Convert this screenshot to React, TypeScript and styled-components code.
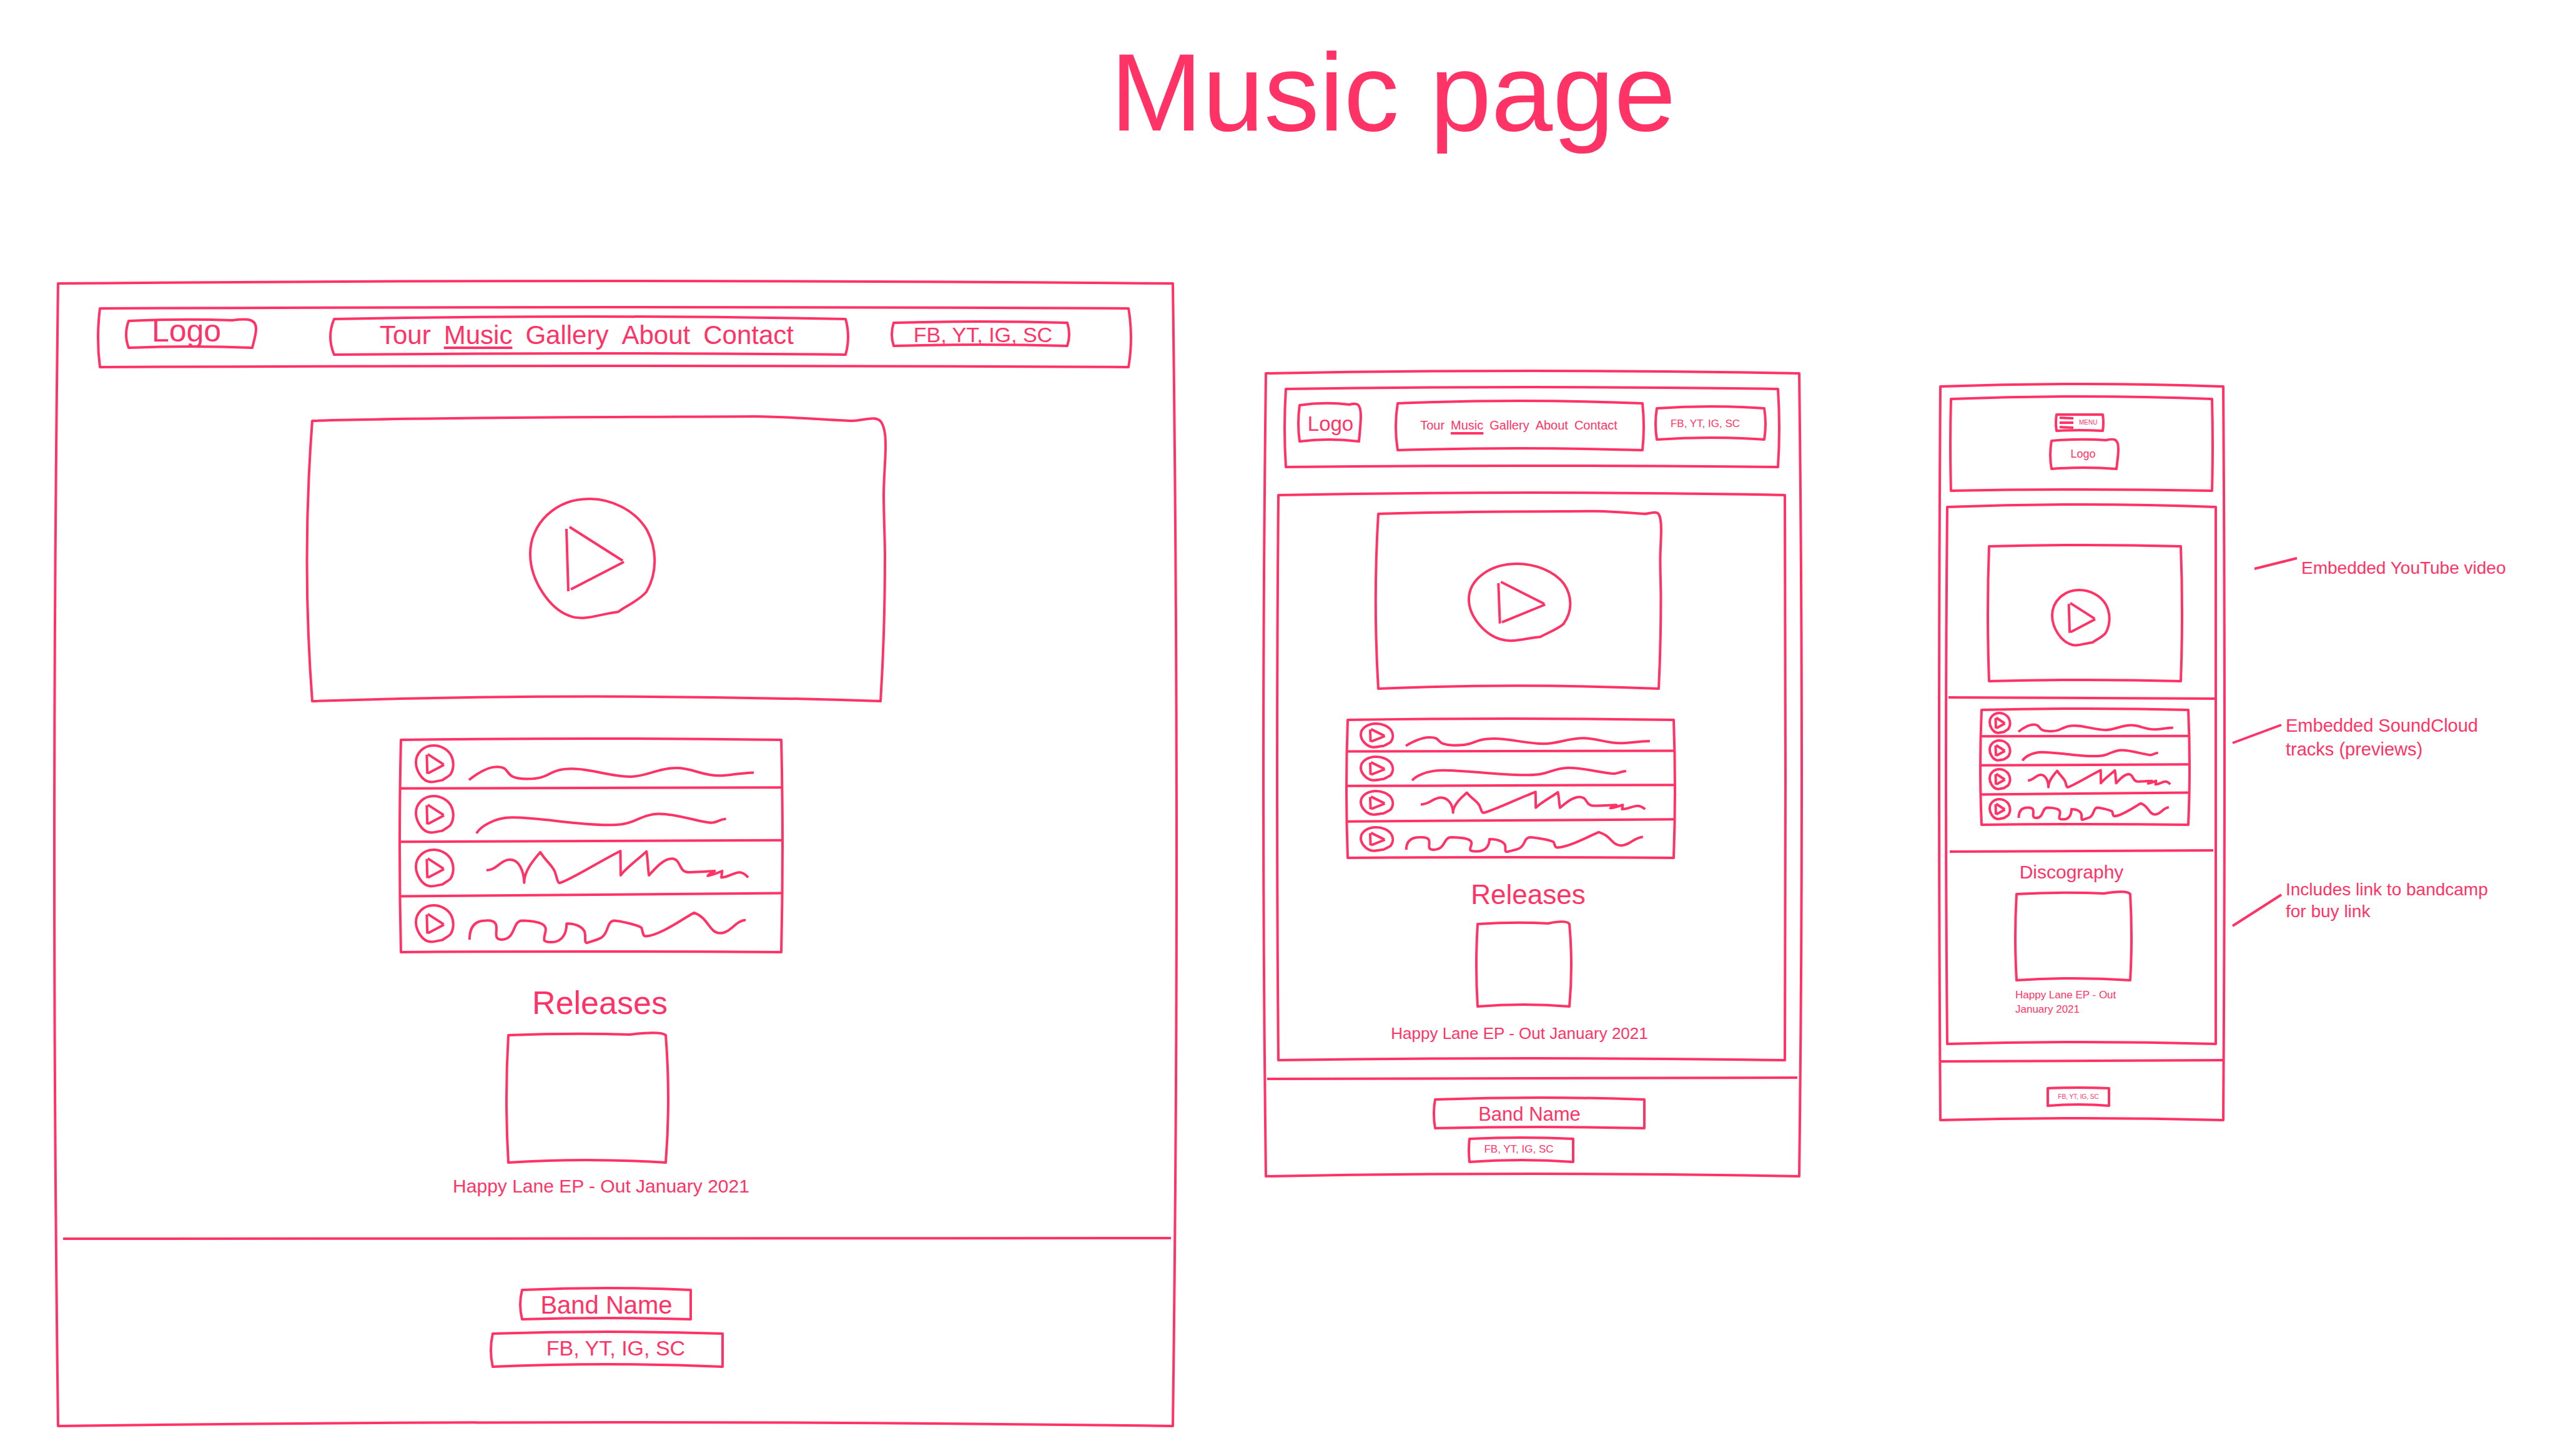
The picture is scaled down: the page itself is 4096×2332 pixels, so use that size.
import React from 'react';
import styled, { createGlobalStyle } from 'styled-components';

const INK = '#ff3366';

const GlobalStyle = createGlobalStyle`
  *, *::before, *::after { box-sizing: border-box; }
  body {
    margin: 0;
    background: #ffffff;
    color: ${INK};
    font-family: "Liberation Sans", Arial, sans-serif;
  }
`;

/* ---------- hand-drawn line work ---------- */

const Drawing = styled.svg`
  display: block;
  width: 100%;
  height: 100%;
  overflow: visible;
  fill: none;
  stroke: ${INK};
  stroke-width: 4px;
  stroke-linejoin: round;

  path {
    vector-effect: non-scaling-stroke;
  }
`;

const Backdrop = styled(Drawing)`
  position: absolute;
  inset: 0;
  pointer-events: none;
`;

type Corner = 'plain' | 'soft' | 'round';

interface OutlineProps {
  w: number;
  h: number;
  /** how far the top, right, bottom and left strokes bow, in px */
  bow: [number, number, number, number];
  corner?: Corner;
}

function Outline({ w, h, bow: [t, r, b, l], corner = 'plain' }: OutlineProps) {
  const tops: Record<Corner, string> = {
    plain: `M0 0 Q${w / 2} ${-2 * t} ${w} 0 Q${w + 2 * r} ${h / 2} ${w} ${h}`,
    soft: `M0 0 Q${w * 0.4} ${-2 * t} ${w * 0.77} -1 Q${w * 0.97} -7 ${w} 0 Q${w + 2 * r} ${h / 2} ${w} ${h}`,
    round:
      `M0 0 Q${w * 0.42} ${-2 * t} ${w * 0.84} -1 C${w * 0.96} -4 ${w + r} -4 ${w + r} ${h * 0.3} ` +
      `C${w + r} ${h * 0.5} ${w + r / 3} ${h * 0.8} ${w} ${h}`,
  };
  return (
    <Backdrop viewBox={`0 0 ${w} ${h}`} preserveAspectRatio="none" aria-hidden="true">
      <path d={`${tops[corner]} Q${w / 2} ${h - 2 * b} 0 ${h} Q${-2 * l} ${h / 2} 0 0 Z`} />
    </Backdrop>
  );
}

function VideoOutline() {
  return (
    <Backdrop viewBox="0 0 910 449" preserveAspectRatio="none" aria-hidden="true">
      <path d="M0 0 C200 -6 500 -6 708 -7 C780 -6 830 -1 865 0 C885 -1 903 -9 911 2 C918 13 918 30 918 42 C918 60 915 95 915 119 C915 150 917 190 917 215 C917 300 915 370 910 449 Q455 434 0 449 Q-17 224 0 0 Z" />
    </Backdrop>
  );
}

function PlayMark() {
  return (
    <Drawing viewBox="0 0 200 192" preserveAspectRatio="none" aria-hidden="true">
      <path d="M95 0 C40 0 0 40 0 88 C0 132 32 176 62 187 C86 197 112 184 141 181 C152 172 173 164 186 149 C205 116 202 78 187 50 C168 18 130 0 95 0 Z" />
      <path d="M58 48 L61 148 M63 45 L148 99 M150 101 L65 145" />
    </Drawing>
  );
}

const Rule = styled(Drawing)`
  height: 2px;
`;

function Divider({ from, to }: { from: number; to: number }) {
  return (
    <Rule viewBox="0 0 100 2" preserveAspectRatio="none" aria-hidden="true">
      <path d={`M0 ${from} L100 ${to}`} />
    </Rule>
  );
}

/* ---------- page scaffold ---------- */

const Page = styled.main`
  width: 100%;
  padding: 60px 0 40px;
`;

const TitleRow = styled.header`
  display: grid;
  grid-template-columns: 1778fr 2318fr;
`;

const Title = styled.h1`
  grid-column: 2;
  margin: 0;
  font-size: 177px;
  line-height: 177px;
  font-weight: 400;
  white-space: nowrap;
`;

const Boards = styled.div`
  display: grid;
  grid-template-columns: 93fr 1785fr 149fr 854fr 226fr 453fr 536fr;
  align-items: start;
`;

const Board = styled.section<{ $col: number; $top: number; $end: number }>`
  position: relative;
  grid-column: ${(p) => p.$col};
  margin-top: ${(p) => p.$top}px;
  padding-bottom: ${(p) => p.$end}px;
`;

/* One centred or side-weighted slot: left gutter, content, right gutter. */
const Slot = styled.div<{ $cols: [number, number, number]; $top?: number }>`
  display: grid;
  grid-template-columns: ${(p) => p.$cols.map((c) => `minmax(0, ${c}fr)`).join(' ')};
  padding-top: ${(p) => p.$top ?? 0}px;

  > * {
    grid-column: 2;
  }
`;

const Bar = styled.div<{ $cols: number[]; $h: number }>`
  position: relative;
  display: grid;
  grid-template-columns: ${(p) => p.$cols.map((c) => `minmax(0, ${c}fr)`).join(' ')};
  align-items: start;
  height: ${(p) => p.$h}px;
`;

const Panel = styled.div<{ $pad?: string }>`
  position: relative;
  padding: ${(p) => p.$pad ?? '0'};
`;

const Box = styled.div<{ $h: number; $pad?: string; $col?: number; $top?: number }>`
  position: relative;
  display: flex;
  align-items: center;
  justify-content: center;
  height: ${(p) => p.$h}px;
  padding: ${(p) => p.$pad ?? '0'};
  margin-top: ${(p) => p.$top ?? 0}px;
  ${(p) => (p.$col ? `grid-column: ${p.$col};` : '')}
`;

const Text = styled.span<{ $size: number }>`
  font-size: ${(p) => p.$size}px;
  line-height: 1;
  white-space: nowrap;
`;

const Heading = styled.h2<{ $size: number; $line: number }>`
  margin: 0;
  font-size: ${(p) => p.$size}px;
  line-height: ${(p) => p.$line}px;
  font-weight: 400;
  text-align: center;
`;

const Caption = styled.p<{ $size: number; $line: number; $align?: string }>`
  margin: 0;
  font-size: ${(p) => p.$size}px;
  line-height: ${(p) => p.$line}px;
  text-align: ${(p) => p.$align ?? 'center'};
`;

/* ---------- navigation ---------- */

const NavList = styled.nav<{ $size: number; $gap: number }>`
  display: flex;
  gap: ${(p) => p.$gap}px;
  font-size: ${(p) => p.$size}px;
  line-height: 1;
`;

const NavLink = styled.a<{ $current: boolean }>`
  color: inherit;
  white-space: nowrap;
  text-decoration: ${(p) => (p.$current ? 'underline' : 'none')};
  text-decoration-thickness: 4px;
  text-underline-offset: 4px;
  text-decoration-skip-ink: none;
`;

const PAGES = ['Tour', 'Music', 'Gallery', 'About', 'Contact'];

function Nav({ size, gap }: { size: number; gap: number }) {
  return (
    <NavList $size={size} $gap={gap} aria-label="Pages">
      {PAGES.map((name) => (
        <NavLink key={name} href={`#${name.toLowerCase()}`} $current={name === 'Music'}>
          {name}
        </NavLink>
      ))}
    </NavList>
  );
}

/* ---------- media ---------- */

const bareButton = `
  appearance: none;
  border: 0;
  background: none;
  color: inherit;
  font-family: inherit;
  cursor: pointer;
`;

const VideoStage = styled.div<{ $w: number; $h: number; $pad?: string }>`
  position: relative;
  display: flex;
  align-items: center;
  justify-content: center;
  aspect-ratio: ${(p) => p.$w} / ${(p) => p.$h};
  padding: ${(p) => p.$pad ?? '0'};
`;

const PlayButton = styled.button<{ $w: number; $h: number }>`
  ${bareButton}
  padding: 0;
  width: ${(p) => p.$w}px;
  height: ${(p) => p.$h}px;
`;

const TrackList = styled.ol`
  position: relative;
  list-style: none;
  margin: 0;
  padding: 0;
`;

const TrackRow = styled.li<{ $h: number }>`
  position: relative;
  display: grid;
  grid-template-columns: 24fr 60fr 25fr 456fr 44fr;
  align-items: center;
  height: ${(p) => p.$h}px;
`;

const TrackPlay = styled.button<{ $h: number }>`
  ${bareButton}
  grid-column: 2;
  padding: 0;
  width: 100%;
  height: ${(p) => p.$h}px;
`;

const Wave = styled(Drawing)`
  grid-column: 4;
  min-height: 0;
`;

const WAVES = [
  {
    box: '340 115 1027 251',
    tilt: 5,
    d: 'M340 324 C370 290 410 256 440 256 C500 256 455 318 548 319 C640 320 620 266 712 266 C780 266 850 307 920 307 C980 307 1020 262 1088 262 C1145 262 1180 302 1243 302 C1280 302 1310 288 1367 286',
  },
  {
    box: '340 366 1027 271',
    tilt: 9,
    d: 'M367 598 C380 565 430 517 495 517 C600 517 720 555 840 555 C890 555 905 550 930 537 C960 520 985 499 1024 498 C1095 498 1165 540 1215 544 C1235 544 1240 527 1267 524',
  },
  {
    box: '340 637 1027 274',
    tilt: 18,
    d: 'M403 786 C440 786 455 732 488 732 C520 732 538 790 539 850 C538 790 575 730 597 694 C620 745 640 760 650 795 C658 830 660 852 667 851 C700 840 800 750 886 688 L887 812 C905 775 955 725 980 690 C985 730 985 780 989 812 C1010 780 1040 727 1072 727 C1105 727 1095 795 1130 796 C1170 797 1195 792 1226 790 C1215 800 1205 805 1201 815 C1220 810 1240 798 1253 790 L1250 823 C1275 823 1295 797 1315 797 C1330 797 1340 812 1347 823',
  },
  {
    box: '340 911 1027 293',
    tilt: 0,
    d: 'M342 1140 C342 1080 358 1043 400 1043 C475 1036 410 1140 457 1140 C510 1140 495 1044 532 1043 C660 1048 602 1110 612 1145 C620 1155 630 1153 640 1153 C675 1153 692 1110 692 1058 C735 1058 760 1085 759 1120 C759 1150 758 1155 765 1157 C775 1152 800 1143 815 1132 C845 1108 835 1048 863 1043 C885 1045 950 1065 962 1080 C968 1100 965 1122 977 1123 C1030 1120 1120 1025 1152 1003 C1205 1030 1205 1105 1245 1107 C1285 1107 1300 1042 1338 1040',
  },
];

function Tracks({ rows, icon, w }: { rows: number[]; icon: number; w: number }) {
  const total = rows.reduce((a, b) => a + b, 0);
  return (
    <TrackList>
      <Outline w={w} h={total} bow={[2, 2, 1, 2]} />
      {WAVES.map((wave, i) => (
        <TrackRow key={wave.box} $h={rows[i]}>
          {i < WAVES.length - 1 && (
            <Backdrop viewBox="0 0 100 300" preserveAspectRatio="none" aria-hidden="true">
              <path d={`M0 ${300 + wave.tilt / 2} L100 ${300 - wave.tilt / 2}`} />
            </Backdrop>
          )}
          <TrackPlay $h={icon} type="button" aria-label={`Play track ${i + 1}`}>
            <PlayMark />
          </TrackPlay>
          <Wave viewBox={wave.box} preserveAspectRatio="none" aria-hidden="true">
            <path d={wave.d} />
          </Wave>
        </TrackRow>
      ))}
    </TrackList>
  );
}

/* ---------- mobile menu ---------- */

const MenuButton = styled.button`
  ${bareButton}
  position: relative;
  display: flex;
  align-items: center;
  gap: 9px;
  height: 26px;
  padding: 0 0 0 5px;
  font-size: 10px;
  line-height: 1;
`;

const MenuIcon = styled(Drawing)`
  width: 22px;
  height: 18px;
`;

/* ---------- notes ---------- */

const Notes = styled.aside`
  grid-column: 7;
  display: flex;
  flex-direction: column;
`;

const Note = styled.div<{ $top: number; $left: number }>`
  display: flex;
  align-items: flex-start;
  gap: 7px;
  margin-top: ${(p) => p.$top}px;
  padding-left: ${(p) => p.$left}px;
`;

const Leader = styled(Drawing)<{ $w: number; $h: number; $drop: number }>`
  flex: none;
  width: ${(p) => p.$w}px;
  height: ${(p) => p.$h}px;
  margin-top: ${(p) => p.$drop}px;
`;

const NoteText = styled.p<{ $size: number; $line: number }>`
  margin: 0;
  max-width: 340px;
  font-size: ${(p) => p.$size}px;
  line-height: ${(p) => p.$line}px;
`;

interface NoteSpec {
  text: string;
  top: number;
  left: number;
  leader: [number, number, number];
  size: number;
  line: number;
}

const NOTES: NoteSpec[] = [
  { text: 'Embedded YouTube video', top: 654, left: 50, leader: [68, 17, 3], size: 28, line: 38 },
  { text: 'Embedded SoundCloud tracks (previews)', top: 214, left: 15, leader: [78, 29, 18], size: 29, line: 38 },
  { text: 'Includes link to bandcamp for buy link', top: 188, left: 15, leader: [78, 50, 26], size: 28, line: 35 },
];

const SOCIAL = 'FB, YT, IG, SC';
const RELEASE = 'Happy Lane EP - Out January 2021';

/* ---------- boards ---------- */

function DesktopBoard() {
  return (
    <Board $col={2} $top={217} $end={95} aria-label="Desktop">
      <Outline w={1785} h={1830} bow={[4, 6, 6, 6]} />
      <Slot $cols={[67, 1647, 71]} $top={40}>
        <Bar $cols={[46, 198, 131, 819, 77, 278, 98]} $h={94}>
          <Outline w={1647} h={94} bow={[2, 4, 2, 3]} />
          <Box $col={2} $top={20} $h={43} $pad="0 13px 12px 0">
            <Outline w={198} h={43} bow={[2, 6, 2, 4]} corner="round" />
            <Text $size={50}>Logo</Text>
          </Box>
          <Box $col={4} $top={17} $h={57} $pad="0 10px 6px 0">
            <Outline w={819} h={57} bow={[4, 4, 2, 6]} />
            <Nav size={42} gap={21} />
          </Box>
          <Box $col={6} $top={23} $h={37} $pad="0 0 0 8px">
            <Outline w={278} h={37} bow={[2, 3, 2, 3]} />
            <Text $size={34}>{SOCIAL}</Text>
          </Box>
        </Bar>
      </Slot>

      <Slot $cols={[407, 910, 468]} $top={86}>
        <VideoStage $w={910} $h={449} $pad="0 12px 8px 0">
          <VideoOutline />
          <PlayButton $w={200} $h={192} type="button" aria-label="Play video">
            <PlayMark />
          </PlayButton>
        </VideoStage>
      </Slot>
      <Slot $cols={[549, 609, 627]} $top={62}>
        <Tracks rows={[77, 85, 86, 92]} icon={59} w={609} />
      </Slot>
      <Slot $cols={[0, 1735, 50]} $top={51}>
        <Heading $size={52} $line={60}>Releases</Heading>
      </Slot>
      <Slot $cols={[721, 252, 812]} $top={22}>
        <Box $h={204}>
          <Outline w={252} h={204} bow={[2, 4, 4, 3]} corner="soft" />
        </Box>
      </Slot>
      <Slot $cols={[0, 1739, 46]} $top={20}>
        <Caption $size={30} $line={36}>{RELEASE}</Caption>
      </Slot>

      <Slot $cols={[8, 1774, 3]} $top={65}>
        <Divider from={1} to={0} />
      </Slot>
      <Slot $cols={[743, 270, 772]} $top={81}>
        <Box $h={47}>
          <Outline w={270} h={47} bow={[3, 0, 2, 3]} />
          <Text $size={40}>Band Name</Text>
        </Box>
      </Slot>
      <Slot $cols={[696, 368, 721]} $top={23}>
        <Box $h={53} $pad="0 0 8px 26px">
          <Outline w={368} h={53} bow={[3, 0, 4, 3]} />
          <Text $size={34}>{SOCIAL}</Text>
        </Box>
      </Slot>
    </Board>
  );
}

function TabletBoard() {
  return (
    <Board $col={4} $top={361} $end={23} aria-label="Tablet">
      <Outline w={854} h={1286} bow={[4, 4, 4, 4]} />
      <Slot $cols={[32, 788, 34]} $top={25}>
        <Bar $cols={[22, 95, 62, 392, 23, 172, 22]} $h={125}>
          <Outline w={788} h={125} bow={[3, 2, 2, 2]} />
          <Box $col={2} $top={26} $h={58} $pad="0 0 0 4px">
            <Outline w={95} h={58} bow={[3, 3, 3, 2]} corner="round" />
            <Text $size={33}>Logo</Text>
          </Box>
          <Box $col={4} $top={23} $h={75} $pad="0 4px 6px 0">
            <Outline w={392} h={75} bow={[4, 2, 3, 3]} />
            <Nav size={20} gap={10} />
          </Box>
          <Box $col={6} $top={31} $h={50} $pad="0 17px 2px 0">
            <Outline w={172} h={50} bow={[3, 2, 3, 2]} />
            <Text $size={17}>{SOCIAL}</Text>
          </Box>
        </Bar>
      </Slot>

      <Slot $cols={[20, 811, 23]} $top={45}>
        <Panel $pad="30px 0 28px">
          <Outline w={811} h={905} bow={[4, 1, 3, 2]} />
          <Slot $cols={[160, 449, 202]}>
            <VideoStage $w={449} $h={280} $pad="4px 0 0 4px">
              <VideoOutline />
              <PlayButton $w={163} $h={124} type="button" aria-label="Play video">
                <PlayMark />
              </PlayButton>
            </VideoStage>
          </Slot>
          <Slot $cols={[111, 522, 178]} $top={50}>
            <Tracks rows={[50, 55, 56, 60]} icon={38} w={522} />
          </Slot>
          <Slot $cols={[0, 800, 11]} $top={34}>
            <Heading $size={44} $line={50}>Releases</Heading>
          </Slot>
          <Slot $cols={[319, 147, 345]} $top={22}>
            <Box $h={132}>
              <Outline w={147} h={132} bow={[2, 3, 3, 2]} corner="soft" />
            </Box>
          </Slot>
          <Slot $cols={[0, 772, 39]} $top={28}>
            <Caption $size={26} $line={30}>{RELEASE}</Caption>
          </Slot>
        </Panel>
      </Slot>

      <Slot $cols={[2, 849, 3]} $top={28}>
        <Divider from={2} to={0} />
      </Slot>
      <Slot $cols={[271, 335, 248]} $top={33}>
        <Box $h={46} $pad="0 33px 0 0">
          <Outline w={335} h={46} bow={[3, 0, 2, 2]} />
          <Text $size={31}>Band Name</Text>
        </Box>
      </Slot>
      <Slot $cols={[326, 166, 362]} $top={17}>
        <Box $h={37} $pad="0 8px 4px 0">
          <Outline w={166} h={37} bow={[2, 0, 3, 1]} />
          <Text $size={17}>{SOCIAL}</Text>
        </Box>
      </Slot>
    </Board>
  );
}

function PhoneBoard() {
  return (
    <Board $col={6} $top={382} $end={23} aria-label="Phone">
      <Outline w={453} h={1175} bow={[4, 2, 3, 2]} />
      <Slot $cols={[17, 418, 18]} $top={20}>
        <Panel $pad="25px 0 35px">
          <Outline w={418} h={147} bow={[4, 1, 2, 1]} />
          <Slot $cols={[169, 74, 175]}>
            <MenuButton type="button">
              <Outline w={74} h={26} bow={[0, 1, 1, 1]} />
              <MenuIcon viewBox="0 0 22 18" aria-hidden="true">
                <path d="M0 1 L22 2 M0 9 L22 9 M0 16 L22 17" />
              </MenuIcon>
              MENU
            </MenuButton>
          </Slot>
          <Slot $cols={[161, 104, 153]} $top={16}>
            <Box $h={45} $pad="0 3px 4px 0">
              <Outline w={104} h={45} bow={[2, 3, 2, 2]} corner="round" />
              <Text $size={18}>Logo</Text>
            </Box>
          </Slot>
        </Panel>
      </Slot>

      <Slot $cols={[11, 430, 12]} $top={26}>
        <Panel $pad="63px 0 44px">
          <Outline w={430} h={860} bow={[4, 0, 3, 2]} />
          <Slot $cols={[67, 307, 56]}>
            <VideoStage $w={307} $h={216} $pad="12px 14px 0 0">
              <Outline w={307} h={216} bow={[2, 2, 2, 2]} />
              <PlayButton $w={92} $h={89} type="button" aria-label="Play video">
                <PlayMark />
              </PlayButton>
            </VideoStage>
          </Slot>
          <Slot $cols={[2, 428, 0]} $top={26}>
            <Divider from={0} to={2} />
          </Slot>
          <Slot $cols={[55, 331, 44]} $top={18}>
            <Tracks rows={[42, 46, 46, 50]} icon={32} w={331} />
          </Slot>
          <Slot $cols={[4, 422, 4]} $top={41}>
            <Divider from={2} to={0} />
          </Slot>
          <Slot $cols={[0, 398, 32]} $top={16}>
            <Heading $size={30} $line={34}>Discography</Heading>
          </Slot>
          <Slot $cols={[111, 182, 137]} $top={18}>
            <Box $h={138}>
              <Outline w={182} h={138} bow={[2, 2, 3, 2]} corner="soft" />
            </Box>
          </Slot>
          <Slot $cols={[109, 170, 151]} $top={12}>
            <Caption $size={17} $line={23} $align="left">{RELEASE}</Caption>
          </Slot>
        </Panel>
      </Slot>

      <Slot $cols={[0, 453, 0]} $top={26}>
        <Divider from={2} to={0} />
      </Slot>
      <Slot $cols={[172, 98, 183]} $top={43}>
        <Box $h={28}>
          <Outline w={98} h={28} bow={[1, 0, 2, 0]} />
          <Text $size={10}>{SOCIAL}</Text>
        </Box>
      </Slot>
    </Board>
  );
}

export default function App() {
  return (
    <Page>
      <GlobalStyle />
      <TitleRow>
        <Title>Music page</Title>
      </TitleRow>
      <Boards>
        <DesktopBoard />
        <TabletBoard />
        <PhoneBoard />
        <Notes>
          {NOTES.map(({ text, top, left, leader: [w, h, drop], size, line }) => (
            <Note key={text} $top={top} $left={left}>
              <Leader viewBox={`0 0 ${w} ${h}`} $w={w} $h={h} $drop={drop} aria-hidden="true">
                <path d={`M0 ${h} L${w} 0`} />
              </Leader>
              <NoteText $size={size} $line={line}>{text}</NoteText>
            </Note>
          ))}
        </Notes>
      </Boards>
    </Page>
  );
}
